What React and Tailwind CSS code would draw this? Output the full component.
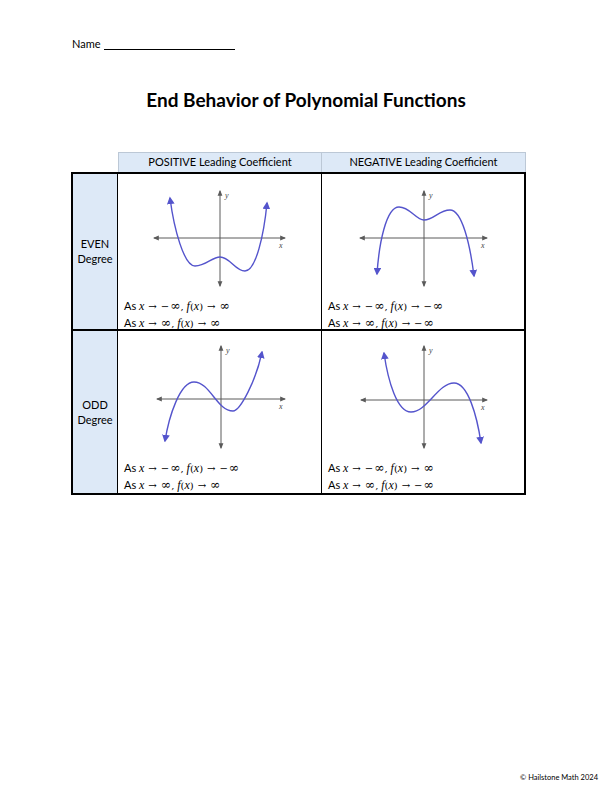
import React from 'react';

const CURVE = '#5454cc';
const AXIS = '#5a5a5a';

function Graph({ id, h, ox, oy, x1, x2, y1, y2, d }) {
  return (
    <svg width="204" height={h} className="block shrink-0">
      <defs>
        <marker id={`ax-${id}`} viewBox="0 0 10 10" refX="8" refY="5" markerWidth="6" markerHeight="6" orient="auto-start-reverse">
          <path d="M0,1 L10,5 L0,9 Z" fill={AXIS} />
        </marker>
        <marker id={`cv-${id}`} viewBox="0 0 10 10" refX="8" refY="5" markerWidth="5.5" markerHeight="5.5" orient="auto-start-reverse">
          <path d="M0,0 L10,5 L0,10 Z" fill={CURVE} />
        </marker>
      </defs>
      <line x1={x1} y1={oy} x2={x2} y2={oy} stroke={AXIS} strokeWidth="1" markerStart={`url(#ax-${id})`} markerEnd={`url(#ax-${id})`} />
      <line x1={ox} y1={y1} x2={ox} y2={y2} stroke={AXIS} strokeWidth="1" markerStart={`url(#ax-${id})`} markerEnd={`url(#ax-${id})`} />
      <text x={ox + 5} y={y1 + 7} fontSize="8" fontStyle="italic" fontFamily="Liberation Serif, serif" fill="#444">y</text>
      <text x={x2 - 6} y={oy + 10} fontSize="8" fontStyle="italic" fontFamily="Liberation Serif, serif" fill="#444">x</text>
      <path d={d} fill="none" stroke={CURVE} strokeWidth="1.4" markerStart={`url(#cv-${id})`} markerEnd={`url(#cv-${id})`} />
    </svg>
  );
}

function M({ children }) {
  return <span className="italic font-['Liberation_Serif',serif] text-[12px]">{children}</span>;
}

function S({ children }) {
  return <span className="font-['DejaVu_Serif',serif] text-[10px]">{children}</span>;
}

function Inf({ neg }) {
  return (
    <span className="font-['DejaVu_Serif',serif]">
      {neg && <span className="text-[10px] mr-[1px]">−</span>}
      <span className="text-[12.5px]">∞</span>
    </span>
  );
}

function Arrow() {
  return <span className="font-['DejaVu_Serif',serif] text-[10px] mx-[4px]">→</span>;
}

function Line({ neg, fneg }) {
  return (
    <div className="leading-[16px] whitespace-nowrap">
      As <M>x</M>
      <Arrow />
      <Inf neg={neg} />
      <S>,</S> <M>f</M>
      <S>(</S>
      <M>x</M>
      <S>)</S>
      <Arrow />
      <Inf neg={fneg} />
    </div>
  );
}

function Cell({ graph, lines, h, border }) {
  return (
    <div className={`flex flex-col ${border}`}>
      <Graph {...graph} h={h} />
      <div className="pl-[6px] text-[11px] text-black">
        {lines.map((l, i) => (
          <Line key={i} {...l} />
        ))}
      </div>
    </div>
  );
}

export default function App() {
  return (
    <div className="w-[612px] h-[792px] bg-white flex flex-col font-['Lato',sans-serif] text-black">
      <div className="pt-[36px] pl-[72px] flex items-end text-[11px]">
        <span>Name</span>
        <span className="ml-[3px] w-[131px] border-b border-black mb-[3px]"></span>
      </div>

      <h1 className="mt-[35px] text-center text-[19px] leading-[24px] font-bold">End Behavior of Polynomial Functions</h1>

      <div className="mt-[40px] ml-[71px] w-[455px]">
        <div className="flex ml-[47px] h-[20px] text-[11px]">
          <div className="w-[204px] bg-[#dde9f7] border border-[#bcc8d6] border-b-0 flex items-center justify-center">POSITIVE Leading Coefficient</div>
          <div className="w-[204px] bg-[#dde9f7] border border-[#bcc8d6] border-l-0 border-b-0 flex items-center justify-center">NEGATIVE Leading Coefficient</div>
        </div>
        <div className="border-2 border-black grid grid-cols-[45px_204px_1fr] grid-rows-[157px_162px] text-[11px]">
          <div className="bg-[#dde9f7] border-r border-black border-b-2 flex flex-col items-center justify-center leading-[15px]">
            <span>EVEN</span>
            <span>Degree</span>
          </div>
          <Cell
            h={124}
            border="border-r border-black border-b-2"
            graph={{ id: 'a', ox: 102, oy: 64, x1: 36, x2: 167, y1: 17, y2: 112, d: 'M52,24 C56,55 66,92 77,92 C88,92 94,83 102,83 C112,83 117,97 127,97 C138,97 146,60 149,29' }}
            lines={[{ neg: true, fneg: false }, { neg: false, fneg: false }]}
          />
          <Cell
            h={124}
            border="border-b-2 border-black"
            graph={{ id: 'b', ox: 102, oy: 64, x1: 38, x2: 165, y1: 17, y2: 112, d: 'M55,100 C57,70 64,33 77,33 C88,33 94,46 102,46 C112,46 117,36 128,36 C140,36 148,70 152,102' }}
            lines={[{ neg: true, fneg: true }, { neg: false, fneg: true }]}
          />
          <div className="bg-[#dde9f7] border-r border-black flex flex-col items-center justify-center leading-[15px]">
            <span>ODD</span>
            <span>Degree</span>
          </div>
          <Cell
            h={129}
            border="border-r border-black"
            graph={{ id: 'c', ox: 103, oy: 68, x1: 39, x2: 167, y1: 15, y2: 117, d: 'M47,110 C51,85 62,51 76,51 C92,51 99,80 115,80 C122,80 138,50 144,21' }}
            lines={[{ neg: true, fneg: true }, { neg: false, fneg: false }]}
          />
          <Cell
            h={129}
            border=""
            graph={{ id: 'd', ox: 102, oy: 69, x1: 39, x2: 165, y1: 15, y2: 117, d: 'M62,22 C66,50 75,81 89,81 C105,81 116,52 132,52 C146,52 155,85 159,112' }}
            lines={[{ neg: true, fneg: false }, { neg: false, fneg: true }]}
          />
        </div>
      </div>

      <div className="mt-auto pb-[9px] pr-[14px] text-right text-[7.5px]">© Hailstone Math 2024</div>
    </div>
  );
}
